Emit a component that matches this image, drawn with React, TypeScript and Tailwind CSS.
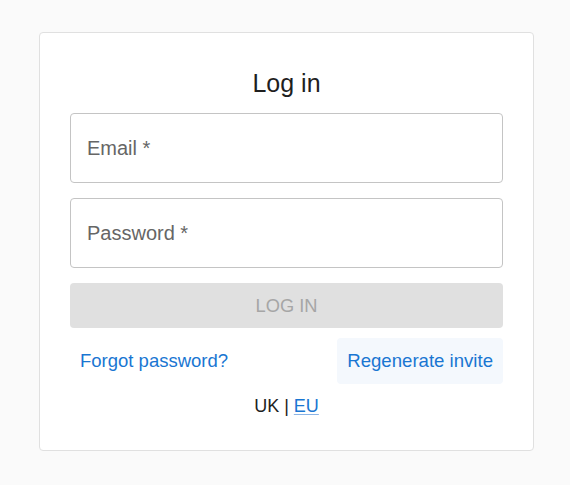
import React from "react";

export default function App() {
  return (
    <div className="min-h-[485px] w-[570px] bg-[#fafafa] pt-[32px] pl-[39px]" style={{ fontFamily: '"Liberation Sans", Arial, sans-serif' }}>
      <div className="w-[495px] rounded-[4px] border border-[#e0e0e0] bg-white px-[30px] pt-[35px] pb-[33px]">
        <div className="h-[30px] text-center text-[25px] leading-[30px] text-[#1f1f1f]">Log in</div>
        <div className="mt-[15px] flex h-[70px] items-center rounded-[4px] border border-[#c4c4c4] px-[16px] text-[20px] text-[#666666]">
          Email *
        </div>
        <div className="mt-[15px] flex h-[70px] items-center rounded-[4px] border border-[#c4c4c4] px-[16px] text-[20px] text-[#666666]">
          Password *
        </div>
        <div className="mt-[15px] flex h-[45px] items-center justify-center rounded-[4px] bg-[#e0e0e0] text-[18.3px] text-[#a6a6a6]">
          LOG IN
        </div>
        <div className="mt-[10px] flex h-[46px] items-center justify-between">
          <div className="flex h-full items-center px-[10px] text-[18.5px] text-[#1976d2]">Forgot password?</div>
          <div className="flex h-full items-center rounded-[4px] bg-[#f4f8fd] px-[10px] text-[18.6px] text-[#1976d2]">Regenerate invite</div>
        </div>
        <div className="mt-[12px] text-center text-[18px] leading-[21px] text-[#212121]">
          UK | <span className="text-[#1976d2] underline decoration-[#8bb4e6] underline-offset-[2px]">EU</span>
        </div>
      </div>
    </div>
  );
}
